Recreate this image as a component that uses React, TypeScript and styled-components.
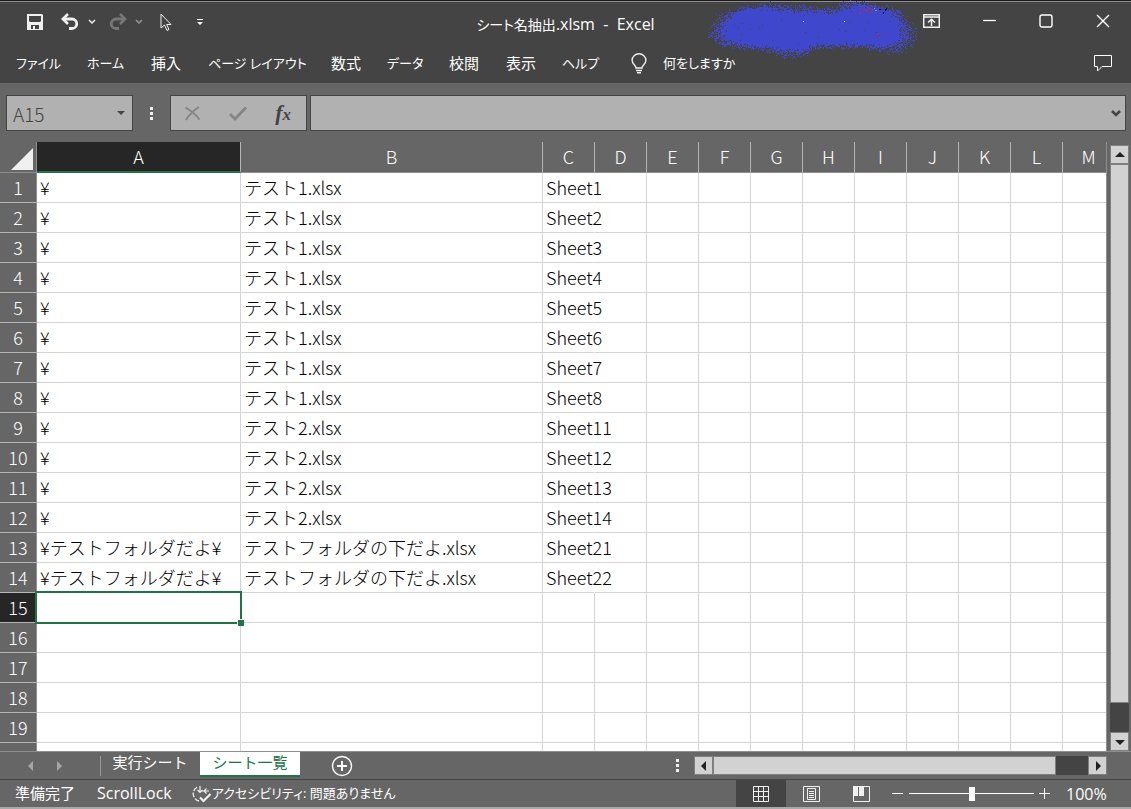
import React from "react";
import styled, { createGlobalStyle } from "styled-components";

const GlobalStyle = createGlobalStyle`
  * { box-sizing: border-box; }
  html, body { margin: 0; padding: 0; }
  body {
    background: #666;
    color: #fff;
    font-family: "Open Sans", "Noto Sans CJK JP", sans-serif;
    font-size: 15px;
  }
  button, input { font: inherit; color: inherit; }
  button { border: 0; padding: 0; background: none; display: flex; align-items: center; justify-content: center; }
  svg { display: block; flex: none; }
`;

const gridFont = `"Noto Sans CJK JP", "Noto Sans", sans-serif`;

const Window = styled.div`
  height: 100vh;
  display: flex;
  flex-direction: column;
  overflow: hidden;
`;

/* ---------- title bar and menu ---------- */

const Header = styled.header`
  position: relative;
  background: #444;
  border-top: 1px solid #1d1a20;
  box-shadow: inset 0 1px 0 #8d8b8e;
  height: 83px;
  flex: none;
`;

const TitleBar = styled.div`
  display: grid;
  grid-template-columns: 1fr auto 1fr;
  align-items: center;
  height: 42px;
`;

const QuickAccess = styled.div`
  display: flex;
  align-items: center;
  padding-left: 26px;
`;

const QuickButton = styled.button<{ $gap: number }>`
  margin-right: ${(p) => p.$gap}px;
`;

const Title = styled.h1`
  margin: 4px 0 0;
  font-size: 16px;
  line-height: 20px;
  font-weight: 400;
  font-feature-settings: "palt";
  white-space: pre;
`;

const TitleName = styled.span`
  font-size: 14px;
`;

const WindowButtons = styled.div`
  display: flex;
  justify-content: flex-end;
  padding: 0 21px 2px 0;
  gap: 43px;
`;

const Scribble = styled.svg`
  position: absolute;
  top: -1px;
  right: 211px;
`;

const MenuBar = styled.nav`
  display: flex;
  align-items: center;
  height: 40px;
  padding: 0 19px 0 16px;
`;

const MenuItem = styled.button<{ $width: number; $kana?: boolean }>`
  width: ${(p) => p.$width}px;
  justify-content: flex-start;
  font-size: ${(p) => (p.$kana ? 13 : 15)}px;
  line-height: 20px;
  white-space: nowrap;
  font-feature-settings: "palt";
`;

const Spacer = styled.div`
  flex: 1;
`;

/* ---------- formula bar ---------- */

const FormulaRow = styled.div`
  display: flex;
  align-items: center;
  height: 59px;
  padding: 1px 5px 0 6px;
  flex: none;
`;

const Field = styled.div`
  display: flex;
  align-items: center;
  height: 36px;
  border: 1px solid #444;
  background: #b1b1b1;
  color: #444;
`;

const NameBox = styled(Field)`
  width: 127px;
  padding: 0 7px 0 6px;
`;

const NameInput = styled.input`
  flex: 1;
  min-width: 0;
  border: 0;
  padding: 2px 0 0;
  background: none;
  font-family: ${gridFont};
  font-size: 19px;
  line-height: 24px;
  font-weight: 300;
`;

const FormulaButtons = styled(Field)`
  width: 137px;
  margin-right: 3px;
  justify-content: space-between;
  padding: 0 15px 0 13px;
`;

const FormulaField = styled(Field)`
  flex: 1;
  padding-right: 4px;
`;

const FormulaInput = styled.input`
  flex: 1;
  min-width: 0;
  border: 0;
  background: none;
  font-size: 15px;
`;

const Dots = styled.div<{ $width: number }>`
  width: ${(p) => p.$width}px;
  display: flex;
  flex-direction: column;
  align-items: center;
  gap: 2px;
  &::before, &::after, & > i { content: ""; width: 3px; height: 3px; background: #f0f0f0; }
`;

/* ---------- sheet ---------- */

const Workspace = styled.main`
  flex: 1;
  min-height: 0;
  display: flex;
  padding-right: 2px;
`;

const GridView = styled.div`
  flex: 1;
  min-width: 0;
  overflow: hidden;
  border-right: 1px solid #8f8f8f;
  background: linear-gradient(#666 30px, #fff 30px);
`;

const Sheet = styled.table`
  table-layout: fixed;
  width: 1115px;
  border-collapse: separate;
  border-spacing: 0;
  font-family: ${gridFont};
  font-size: 18px;
  line-height: 24px;
  font-weight: 300;
`;

const ColHead = styled.th<{ $active?: boolean }>`
  height: 31px;
  padding: 0 0 2px;
  font-size: 18px;
  font-weight: 300;
  color: #fff;
  background: ${(p) => (p.$active ? "#262626" : "#666")};
  border-right: 1px solid #b5b5b5;
  border-bottom: ${(p) => (p.$active ? "2px solid #217346" : "1px solid #8f8f8f")};
`;

const Corner = styled(ColHead)`
  padding: 3px 0 0 11px;
  border-right-color: #8f8f8f;
`;

const RowHead = styled.th<{ $active?: boolean }>`
  height: 30px;
  padding: 0 0 2px;
  font-size: 18px;
  font-weight: 300;
  color: #fff;
  background: ${(p) => (p.$active ? "#262626" : "#666")};
  border-right: 1px solid #8f8f8f;
  border-bottom: 1px solid #b5b5b5;
`;

const Cell = styled.td<{ $open?: boolean }>`
  position: relative;
  padding: 0 0 2px 3px;
  color: #000;
  background: #fff;
  white-space: nowrap;
  border-bottom: 1px solid #d4d4d4;
  border-right: 1px solid ${(p) => (p.$open ? "#fff" : "#d4d4d4")};
`;

const CellText = styled.span`
  position: relative;
  z-index: 1;
`;

const Selection = styled.div`
  position: absolute;
  inset: -2px;
  border: 2px solid #217346;
  z-index: 2;
  &::after {
    content: "";
    position: absolute;
    right: -4px;
    bottom: -4px;
    width: 6px;
    height: 6px;
    border: 1px solid #fff;
    border-right: 0;
    border-bottom: 0;
    background: #217346;
  }
`;

/* ---------- scroll bars ---------- */

const VScroll = styled.div`
  width: 19px;
  margin: 3px 0 0 3px;
  display: flex;
  flex-direction: column;
  background: #444;
`;

const HScroll = styled.div`
  width: 413px;
  height: 19px;
  display: flex;
  background: #444;
`;

const ScrollButton = styled.button`
  width: 19px;
  height: 19px;
  flex: none;
  background: #d2d2d2;
  border: 1px solid #808080;
`;

const Thumb = styled.div`
  background: #d2d2d2;
  border: 1px solid #808080;
`;

const VThumb = styled(Thumb)`
  flex: 539;
`;
const HThumb = styled(Thumb)`
  flex: 343;
`;
const Track = styled.div<{ $part: number }>`
  flex: ${(p) => p.$part};
`;

/* ---------- sheet tabs ---------- */

const TabBar = styled.div`
  display: flex;
  align-items: center;
  height: 28px;
  border-top: 1px solid #8f8f8f;
  padding: 0 24px 0 26px;
  flex: none;
`;

const TabArrows = styled.div`
  display: flex;
  gap: 18px;
  width: 74px;
`;

const TabDivider = styled.div`
  width: 1px;
  height: 20px;
  margin-right: -1px;
  background: #999;
`;

const Tab = styled.button<{ $active?: boolean }>`
  width: 100px;
  height: 25px;
  align-self: flex-start;
  padding-bottom: 4px;
  font-family: "Noto Sans CJK JP", sans-serif;
  font-size: 15px;
  line-height: 20px;
  white-space: nowrap;
  color: ${(p) => (p.$active ? "#217346" : "#fff")};
  background: ${(p) => (p.$active ? "#fff" : "none")};
  border-bottom: 2px solid ${(p) => (p.$active ? "#217346" : "transparent")};
`;

const AddSheet = styled.button`
  margin-left: 31px;
`;

/* ---------- status bar ---------- */

const StatusBar = styled.footer`
  display: flex;
  align-items: center;
  height: 30px;
  flex: none;
  border-top: 1px solid #444;
  border-bottom: 2px solid #a9a9a9;
  padding: 0 22px 0 15px;
  line-height: 20px;
  white-space: nowrap;
`;

const StatusText = styled.span<{ $size: number; $gap: number }>`
  margin-right: ${(p) => p.$gap}px;
  padding-bottom: 1px;
  font-size: ${(p) => p.$size}px;
  font-feature-settings: "palt";
`;

const Views = styled.div`
  display: flex;
  margin-right: 6px;
`;

const ViewButton = styled.button<{ $active?: boolean }>`
  width: 50px;
  height: 27px;
  background: ${(p) => (p.$active ? "#444" : "none")};
`;

const ZoomSlider = styled.input`
  appearance: none;
  width: 125px;
  height: 14px;
  margin: 0 5px 0 6px;
  background: linear-gradient(#fff, #fff) center / 100% 1px no-repeat;
  &::-webkit-slider-thumb {
    appearance: none;
    width: 6px;
    height: 14px;
    background: #fff;
  }
`;

const ZoomLabel = styled.output`
  width: 43px;
  margin-left: 16px;
  font-size: 16px;
`;

/* ---------- drawings ---------- */

// Spray silhouette, left to right: x, outer top, solid top, solid bottom, outer bottom
const outline: [number, number, number, number, number][] = [
  [0, 24, 36, 36, 38],
  [6, 15, 33, 37, 44],
  [16, 10, 26, 37, 49],
  [28, 7, 15, 39, 49],
  [38, 5, 11, 42, 51],
  [62, 0, 11, 44, 53],
  [76, 3, 14, 47, 59],
  [94, 4, 15, 46, 58],
  [108, 6, 14, 42, 50],
  [124, 7, 16, 42, 49],
  [134, 0, 12, 42, 49],
  [152, 0, 8, 42, 48],
  [166, 2, 10, 43, 52],
  [180, 4, 15, 42, 54],
  [193, 9, 24, 36, 54],
  [203, 20, 35, 36, 50],
  [209, 29, 38, 38, 40],
];

function buildSpray(): string {
  let seed = 7;
  const random = () => {
    seed = (seed * 1103515245 + 12345) % 2147483648;
    return seed / 2147483648;
  };
  let d = "";
  for (let i = 0; i < outline.length - 1; i++) {
    const a = outline[i];
    const b = outline[i + 1];
    for (let x = a[0]; x < b[0]; x++) {
      const t = (x - a[0]) / (b[0] - a[0]);
      const [top, solidTop, solidBottom, bottom] = [1, 2, 3, 4].map((k) => a[k] + (b[k] - a[k]) * t);
      const side = Math.min(1, (x + 4) / 24, (213 - x) / 24);
      for (let y = Math.ceil(top); y <= bottom; y++) {
        let density = 0.996;
        if (y < solidTop) density = (y - top + 0.5) / (solidTop - top);
        if (y > solidBottom) density = (bottom - y + 0.5) / (bottom - solidBottom);
        if (random() < density * side) d += `M${x} ${y}h1v1h-1z`;
      }
    }
  }
  return d;
}

const spray = buildSpray();

const SprayMark = () => (
  <Scribble width="212" height="60" viewBox="0 0 212 60" shapeRendering="crispEdges" aria-hidden="true">
    <path d={spray} fill="#3f48cc" />
    <path d="M152 8h1v1h-1zM155 9h2v1h-2zM160 8h3v1h-3zM164 9h1v1h-1zM151 12h2v1h-2zM158 10h2v1h-2zM162 12h1v1h-1zM174 8h1v1h-1zM169 34h2v1h-2zM178 35h1v1h-1zM171 37h1v1h-1z" fill="#ed1c24" />
    <path d="M171 9h2v1h-2zM177 9h1v2h-1zM175 12h1v2h-1zM178 8h1v2h-1z" fill="#111" />
    <path d="M166 8h1v1h-1zM167 10h2v1h-2z" fill="#4cb0a0" />
    <path d="M95 21h1v1h-1zM136 21h1v1h-1z" fill="#fff" />
  </Scribble>
);

const SaveIcon = () => (
  <svg width="18" height="18" viewBox="0 0 18 18">
    <path fill="#f0f0f0" fillRule="evenodd" d="M1 1h15l1 1v15H1zM3 3v5l1 1h10l1-1V3zM5 12v4h2v-3h2v3h4v-4z" />
  </svg>
);

const UndoIcon = ({ color, flip }: { color: string; flip?: boolean }) => (
  <svg width="18" height="18" viewBox="0 0 18 18">
    <g transform={flip ? "translate(18 0) scale(-1 1)" : undefined} fill="none" stroke={color}>
      <path d="M3 6h8a4.600 4.600 0 0 1 0 9.500H8" strokeWidth="2.800" />
      <path d="M7 1L1.800 6L7 11" strokeWidth="2.600" />
    </g>
  </svg>
);

const Chevron = ({ color }: { color: string }) => (
  <svg width="8" height="6" viewBox="0 0 8 6">
    <path d="M1 1l3 3l3-3" fill="none" stroke={color} strokeWidth="1.500" />
  </svg>
);

const PointerIcon = () => (
  <svg width="12" height="19" viewBox="0 0 12 19">
    <path d="M1 1v14l3.500-3l2.500 5.500l2-1l-2.300-5H11z" fill="none" stroke="#f0f0f0" />
  </svg>
);

const CustomizeIcon = () => (
  <svg width="6" height="7" viewBox="0 0 6 7">
    <path d="M0 0h6v1H0zM0 3h6L3 6z" fill="#fff" />
  </svg>
);

const RibbonIcon = () => (
  <svg width="17" height="14" viewBox="0 0 17 14" fill="none" stroke="#f0f0f0" strokeWidth="1.500">
    <path d="M.7.700h15.600v12.600H.7zM1 3h15M8.500 12V5.500M5 8.500l3.500-3.300L12 8.500" />
  </svg>
);

const MinimizeIcon = () => (
  <svg width="13" height="14" viewBox="0 0 13 14">
    <path d="M0 6.500h13" stroke="#fff" strokeWidth="1.300" />
  </svg>
);

const MaximizeIcon = () => (
  <svg width="14" height="14" viewBox="0 0 14 14">
    <rect x="1" y="1" width="12" height="12" rx="2" fill="none" stroke="#fff" strokeWidth="1.400" />
  </svg>
);

const CloseIcon = () => (
  <svg width="14" height="14" viewBox="0 0 14 14">
    <path d="M1 1l12 12M13 1L1 13" stroke="#fff" strokeWidth="1.400" />
  </svg>
);

const BulbIcon = () => (
  <svg width="16" height="21" viewBox="0 0 16 21" fill="none" stroke="#f0f0f0" strokeWidth="1.400">
    <path d="M5 15c0-3-3.900-3.700-3.900-7.700a6.900 6.500 0 0 1 13.800 0c0 4-3.900 4.700-3.900 7.700zM5 17.500h6M6 19.700h4" />
  </svg>
);

const CommentIcon = () => (
  <svg width="18" height="17" viewBox="0 0 18 17">
    <path d="M.5.500h17v11H8l-4.500 4.500v-4.500h-3z" fill="none" stroke="#fff" />
  </svg>
);

const TriangleIcon = ({ dir, color }: { dir: "up" | "down" | "left" | "right"; color: string }) => {
  const shape = { up: "M0 7h10L5 2z", down: "M0 3h10L5 8z", left: "M7 0v10L2 5z", right: "M3 0v10l5-5z" }[dir];
  return (
    <svg width="10" height="10" viewBox="0 0 10 10">
      <path d={shape} fill={color} />
    </svg>
  );
};

const CancelIcon = () => (
  <svg width="17" height="15" viewBox="0 0 17 15">
    <path d="M1.500 1.500C6 4 12 9 15.500 13.500M15 1C10 4 5 9 2 14" fill="none" stroke="#858585" strokeWidth="2" />
  </svg>
);

const EnterIcon = () => (
  <svg width="18" height="15" viewBox="0 0 18 15">
    <path d="M1 8l5 5L17 1.500" fill="none" stroke="#858585" strokeWidth="2.800" />
  </svg>
);

const FunctionLabel = styled.span`
  font-family: "Liberation Serif", serif;
  font-style: italic;
  font-weight: 700;
  font-size: 22px;
  line-height: 24px;
  & > sub { font-size: 17px; line-height: 15px; vertical-align: 0; }
`;

const AddIcon = () => (
  <svg width="22" height="22" viewBox="0 0 22 22" fill="none" stroke="#fff">
    <circle cx="11" cy="11" r="9.500" strokeWidth="1.400" />
    <path d="M11 6v10M6 11h10" strokeWidth="2" />
  </svg>
);

const AccessIcon = () => (
  <svg width="20" height="18" viewBox="0 0 20 18" fill="none" stroke="#f0f0f0">
    <path d="M5 2.200A7.500 7.500 0 0 0 7 16" strokeWidth="1.300" strokeDasharray="5 1.500" />
    <path d="M8 1v6M5.500 5L8 7.500L10.500 5M10 6h7M14.500 3.500L12 6l2.500 2.500" strokeWidth="1.200" />
    <path d="M8 12.500l3.500 3.500L18.500 9" strokeWidth="2.200" />
  </svg>
);

const NormalViewIcon = () => (
  <svg width="16" height="16" viewBox="0 0 16 16" fill="none" stroke="#f0f0f0">
    <path d="M.5.500h15v15H.5zM5.500 0v16M10.500 0v16M0 5.500h16M0 10.500h16" />
  </svg>
);

const PageLayoutIcon = () => (
  <svg width="17" height="16" viewBox="0 0 17 16" fill="none" stroke="#f0f0f0">
    <path d="M.5.500h16v15H.5zM4.500 2.500h8v11h-8zM6 5.500h5M6 7.500h5M6 9.500h5M6 11.500h5" />
  </svg>
);

const PageBreakIcon = () => (
  <svg width="17" height="16" viewBox="0 0 17 16">
    <path d="M.5.500h16v15H.5z" fill="none" stroke="#f0f0f0" />
    <path d="M0 0h5v10H0zM6 0h5v10H6z" fill="#f0f0f0" />
  </svg>
);

const ZoomSign = ({ plus }: { plus?: boolean }) => (
  <svg width="11" height="11" viewBox="0 0 11 11">
    <path d={plus ? "M0 5.500h11M5.500 0v11" : "M0 5.500h11"} stroke="#fff" />
  </svg>
);

/* ---------- data ---------- */

const menus: { label: string; width: number; kana?: boolean }[] = [
  { label: "ファイル", width: 71, kana: true },
  { label: "ホーム", width: 64, kana: true },
  { label: "挿入", width: 57 },
  { label: "ページ レイアウト", width: 123, kana: true },
  { label: "数式", width: 56 },
  { label: "データ", width: 62, kana: true },
  { label: "校閲", width: 57 },
  { label: "表示", width: 56 },
  { label: "ヘルプ", width: 69, kana: true },
];

const columns = "ABCDEFGHIJKLM".split("");
const rows: string[][] = [
  ...[1, 2, 3, 4, 5, 6, 7, 8].map((n) => ["¥", "テスト1.xlsx", `Sheet${n}`]),
  ...[11, 12, 13, 14].map((n) => ["¥", "テスト2.xlsx", `Sheet${n}`]),
  ...[21, 22].map((n) => ["¥テストフォルダだよ¥", "テストフォルダの下だよ.xlsx", `Sheet${n}`]),
  [], [], [], [], [], [],
];

export default function App() {
  return (
    <Window>
      <GlobalStyle />
      <Header>
        <TitleBar>
          <QuickAccess>
            <QuickButton $gap={17} aria-label="上書き保存"><SaveIcon /></QuickButton>
            <QuickButton $gap={9} aria-label="元に戻す"><UndoIcon color="#f0f0f0" /></QuickButton>
            <QuickButton $gap={13} aria-label="元に戻す履歴"><Chevron color="#f0f0f0" /></QuickButton>
            <QuickButton $gap={8} aria-label="やり直し"><UndoIcon color="#777" flip /></QuickButton>
            <QuickButton $gap={17} aria-label="やり直し履歴"><Chevron color="#999" /></QuickButton>
            <QuickButton $gap={25} aria-label="選択"><PointerIcon /></QuickButton>
            <QuickButton $gap={0} aria-label="カスタマイズ"><CustomizeIcon /></QuickButton>
          </QuickAccess>
          <Title><TitleName>シート名抽出</TitleName>.xlsm  -  Excel</Title>
          <WindowButtons>
            <button aria-label="リボンの表示オプション"><RibbonIcon /></button>
            <button aria-label="最小化"><MinimizeIcon /></button>
            <button aria-label="最大化"><MaximizeIcon /></button>
            <button aria-label="閉じる"><CloseIcon /></button>
          </WindowButtons>
        </TitleBar>
        <MenuBar>
          {menus.map((m) => (
            <MenuItem key={m.label} $width={m.width} $kana={m.kana}>{m.label}</MenuItem>
          ))}
          <MenuItem $width={32} aria-label="操作アシスト"><BulbIcon /></MenuItem>
          <MenuItem $width={90} $kana>何をしますか</MenuItem>
          <Spacer />
          <button aria-label="コメント"><CommentIcon /></button>
        </MenuBar>
        <SprayMark />
      </Header>

      <FormulaRow>
        <NameBox>
          <NameInput aria-label="名前ボックス" defaultValue="A15" />
          <svg width="8" height="5" viewBox="0 0 8 5"><path d="M0 0h8L4 4z" fill="#444" /></svg>
        </NameBox>
        <Dots $width={37}><i /></Dots>
        <FormulaButtons>
          <button aria-label="キャンセル"><CancelIcon /></button>
          <button aria-label="入力"><EnterIcon /></button>
          <button aria-label="関数の挿入"><FunctionLabel>f<sub>x</sub></FunctionLabel></button>
        </FormulaButtons>
        <FormulaField>
          <FormulaInput aria-label="数式バー" />
          <svg width="10" height="7" viewBox="0 0 10 7"><path d="M1 1l4 4l4-4" fill="none" stroke="#444" strokeWidth="2.500" /></svg>
        </FormulaField>
      </FormulaRow>

      <Workspace>
        <GridView>
          <Sheet>
            <colgroup>
              <col style={{ width: 37 }} />
              {columns.map((c) => (
                <col key={c} style={{ width: c === "A" ? 204 : c === "B" ? 302 : 52 }} />
              ))}
            </colgroup>
            <thead>
              <tr>
                <Corner>
                  <svg width="22" height="22" viewBox="0 0 22 22"><path d="M22 0v22H0z" fill="#f0f0f0" /></svg>
                </Corner>
                {columns.map((c) => (
                  <ColHead key={c} scope="col" $active={c === "A"}>{c}</ColHead>
                ))}
              </tr>
            </thead>
            <tbody>
              {rows.map((row, r) => (
                <tr key={r}>
                  <RowHead scope="row" $active={r === 14}>{r < 19 ? r + 1 : ""}</RowHead>
                  {columns.map((c, i) => (
                    <Cell key={c} $open={c === "C" && row.length > 0}>
                      {row[i] && <CellText>{row[i]}</CellText>}
                      {r === 14 && c === "A" && <Selection />}
                    </Cell>
                  ))}
                </tr>
              ))}
            </tbody>
          </Sheet>
        </GridView>
        <VScroll>
          <ScrollButton aria-label="上へ"><TriangleIcon dir="up" color="#222" /></ScrollButton>
          <VThumb />
          <Track $part={29} />
          <ScrollButton aria-label="下へ"><TriangleIcon dir="down" color="#222" /></ScrollButton>
        </VScroll>
      </Workspace>

      <TabBar>
        <TabArrows>
          <TriangleIcon dir="left" color="#a6a6a6" />
          <TriangleIcon dir="right" color="#a6a6a6" />
        </TabArrows>
        <TabDivider />
        <Tab>実行シート</Tab>
        <Tab $active>シート一覧</Tab>
        <AddSheet aria-label="新しいシート"><AddIcon /></AddSheet>
        <Spacer />
        <Dots $width={34}><i /></Dots>
        <HScroll>
          <ScrollButton aria-label="左へ"><TriangleIcon dir="left" color="#222" /></ScrollButton>
          <HThumb />
          <Track $part={32} />
          <ScrollButton aria-label="右へ"><TriangleIcon dir="right" color="#222" /></ScrollButton>
        </HScroll>
      </TabBar>

      <StatusBar>
        <StatusText $size={15} $gap={22}>準備完了</StatusText>
        <StatusText $size={16} $gap={20}>ScrollLock</StatusText>
        <AccessIcon />
        <StatusText $size={13} $gap={0}>アクセシビリティ: 問題ありません</StatusText>
        <Spacer />
        <Views>
          <ViewButton $active aria-label="標準"><NormalViewIcon /></ViewButton>
          <ViewButton aria-label="ページ レイアウト"><PageLayoutIcon /></ViewButton>
          <ViewButton aria-label="改ページ プレビュー"><PageBreakIcon /></ViewButton>
        </Views>
        <button aria-label="縮小"><ZoomSign /></button>
        <ZoomSlider type="range" min={0} max={200} defaultValue={100} aria-label="ズーム" />
        <button aria-label="拡大"><ZoomSign plus /></button>
        <ZoomLabel>100%</ZoomLabel>
      </StatusBar>
    </Window>
  );
}
